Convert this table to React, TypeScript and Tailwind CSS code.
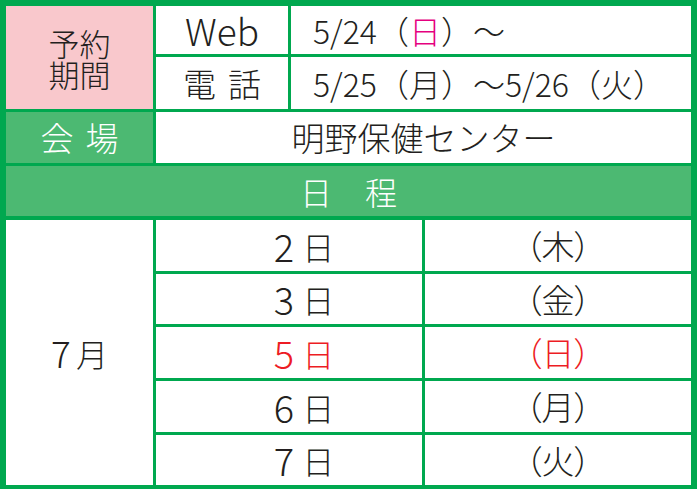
import React from 'react';

const font = "font-['Noto_Sans_CJK_JP','Noto_Sans',sans-serif]";

interface DayRow {
  num: string;
  week: string;
  red?: boolean;
}

const days: DayRow[] = [
  { num: '2', week: '（木）' },
  { num: '3', week: '（金）' },
  { num: '5', week: '（日）', red: true },
  { num: '6', week: '（月）' },
  { num: '7', week: '（火）' },
];

const App: React.FC = () => {
  return (
    <div className={`w-[697px] h-[489px] bg-[#00a84f] pt-[6px] px-[6px] pb-[4px] flex flex-col font-light text-[#231f20] ${font}`}>
      {/* 予約期間 */}
      <div className="grid grid-cols-[147px_132px_1fr] grid-rows-[48px_52px] gap-[3px]">
        <div className="row-span-2 bg-[#f9c8cc] flex items-center justify-center text-center text-[31px] leading-[31px]">
          予約<br />期間
        </div>
        <div className="bg-white flex items-center justify-center text-[37px] leading-none">Web</div>
        <div className="bg-white flex items-center pl-[22px] text-[32px] leading-none whitespace-nowrap">
          5/24<span>（</span><span className="text-[#e5007f]">日</span><span>）～</span>
        </div>
        <div className="bg-white flex items-center justify-center text-[33px] leading-none tracking-[12px] pl-[12px]">電話</div>
        <div className="bg-white flex items-center pl-[22px] text-[32px] leading-none whitespace-nowrap">
          5/25（月）～5/26（火）
        </div>
      </div>

      {/* 会場 */}
      <div className="mt-[3px] grid grid-cols-[147px_1fr] h-[51px] gap-[3px]">
        <div className="bg-[#4cb972] text-white flex items-center justify-center text-[33px] leading-none tracking-[12px] pl-[12px]">会場</div>
        <div className="bg-white flex items-center justify-center text-[33px] leading-none">明野保健センター</div>
      </div>

      {/* 日程 */}
      <div className="mt-[3px] h-[50px] bg-[#4cb972] text-white flex items-center justify-center text-[32px] leading-none tracking-[33px] pl-[33px]">
        日程
      </div>

      <div className="mt-[4px] grid grid-cols-[147px_266px_1fr] grid-rows-[51px_50px_51px_51px_50px] gap-y-[3px] gap-x-[3px] flex-1">
        <div className="row-span-5 bg-white flex items-center justify-center gap-[5px] leading-none">
          <span className="text-[37px]">7</span>
          <span className="text-[32px]">月</span>
        </div>
        {days.map((d) => (
          <React.Fragment key={d.num}>
            <div className={`bg-white flex items-center justify-center gap-[8px] pl-[30px] leading-none ${d.red ? 'text-[#ed1c24]' : ''}`}>
              <span className="text-[38px]">{d.num}</span>
              <span className="text-[32px]">日</span>
            </div>
            <div className={`bg-white flex items-center justify-center text-[33px] leading-none [font-feature-settings:'palt'] ${d.red ? 'text-[#ed1c24]' : ''}`}>
              {d.week}
            </div>
          </React.Fragment>
        ))}
      </div>
    </div>
  );
};

export default App;
